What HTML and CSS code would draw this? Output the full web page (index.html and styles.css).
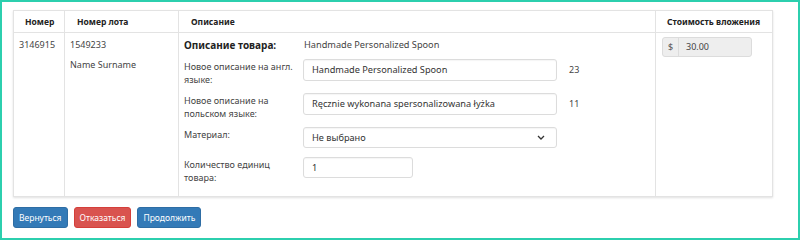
FILE: index.html
```html
<!DOCTYPE html>
<html lang="ru">
<head>
<meta charset="utf-8">
<link rel="stylesheet" href="styles.css">
</head>
<body>
<div class="frame">
  <table class="grid">
    <colgroup>
      <col class="w-num">
      <col class="w-lot">
      <col class="w-desc">
      <col class="w-cost">
    </colgroup>
    <thead>
      <tr class="head">
        <th class="c-num">Номер</th>
        <th class="c-lot">Номер лота</th>
        <th class="c-desc">Описание</th>
        <th class="c-cost">Стоимость вложения</th>
      </tr>
    </thead>
    <tbody>
      <tr class="body">
        <td class="c-num">3146915</td>
        <td class="c-lot">
          <div>1549233</div>
          <div class="name">Name Surname</div>
        </td>
        <td class="c-desc">
          <div class="form">
            <div class="title">Описание товара:</div>
            <div class="value">Handmade Personalized Spoon</div>
            <div></div>

            <div class="label">Новое описание на англ. языке:</div>
            <div class="input wide">Handmade Personalized Spoon</div>
            <div class="count">23</div>

            <div class="label">Новое описание на польском языке:</div>
            <div class="input wide">Ręcznie wykonana spersonalizowana łyżka</div>
            <div class="count">11</div>

            <div class="label">Материал:</div>
            <div class="input wide select">Не выбрано
              <svg class="chev" width="8" height="5" viewBox="0 0 8 5"><path d="M1 1 L4 4 L7 1" fill="none" stroke="#333" stroke-width="1.3"/></svg>
            </div>
            <div></div>

            <div class="label">Количество единиц товара:</div>
            <div class="input short">1</div>
            <div></div>
          </div>
        </td>
        <td class="c-cost">
          <div class="igroup">
            <span class="addon">$</span>
            <span class="ival">30.00</span>
          </div>
        </td>
      </tr>
    </tbody>
  </table>
  <div class="buttons">
    <button class="btn blue">Вернуться</button>
    <button class="btn red">Отказаться</button>
    <button class="btn blue">Продолжить</button>
  </div>
</div>
</body>
</html>
```

FILE: styles.css
```css
html, body {
  margin: 0;
  padding: 0;
  background: #fff;
}
.frame {
  box-sizing: border-box;
  width: 800px;
  height: 240px;
  border: 2px solid #2ccfae;
  padding: 8px 27px 0 11px;
  font-family: "Noto Sans", "Open Sans", sans-serif;
  font-size: 9px;
  color: #444;
}
.grid {
  border-collapse: collapse;
  width: 759px;
  table-layout: fixed;
  box-shadow: 0 1px 2px rgba(0,0,0,0.12);
}
.w-num { width: 51px; }
.w-lot { width: 114px; }
.w-desc { width: 477px; }
.w-cost { width: 117px; }
.grid th, .grid td {
  border: 1px solid #e3e3e3;
  text-align: left;
  vertical-align: top;
}
.head { height: 22px; }
.body { height: 164px; }
.grid th {
  padding: 0;
  vertical-align: middle;
  font-size: 8.5px;
  font-weight: 700;
  color: #222;
}
.grid th.c-num { padding-left: 11px; }
.grid th.c-lot { padding-left: 12px; }
.grid th.c-desc { padding-left: 12px; }
.grid th.c-cost { padding-left: 11px; }
.grid td {
  padding: 0;
}
.grid td.c-num { padding: 5px 0 0 5px; }
.grid td.c-lot { padding: 5px 0 0 5px; }
.grid td.c-lot .name { margin-top: 7px; }
.grid td.c-desc { padding: 5px 0 0 5px; }
.grid td.c-cost { padding: 4px 0 0 6px; }
.form {
  display: grid;
  grid-template-columns: 119px 254px 30px;
  grid-template-rows: 21px 34px 34px 30px 24px;
  align-items: start;
}
.title {
  font-size: 10px;
  font-weight: 700;
  color: #222;
  line-height: 14px;
}
.value {
  line-height: 14px;
  padding-left: 1px;
  font-size: 9.2px;
}
.label {
  line-height: 13px;
  padding-top: 1px;
  padding-right: 2px;
  color: #444;
  font-size: 9px;
}
.input {
  box-sizing: border-box;
  height: 22px;
  border: 1px solid #dcdcdc;
  border-radius: 3px;
  padding: 0 8px;
  line-height: 20px;
  color: #333;
  font-size: 9.2px;
  box-shadow: inset 0 1px 1px rgba(0,0,0,0.04);
}
.select {
  display: flex;
  justify-content: space-between;
  align-items: center;
  height: 21px;
}
.chev { margin-right: 3px; }
.short {
  width: 110px;
  height: 21px;
}
.count {
  padding-left: 12px;
  line-height: 22px;
}
.igroup {
  display: flex;
  width: 90px;
  height: 20px;
  box-sizing: border-box;
  border: 1px solid #dcdcdc;
  border-radius: 3px;
  background: #eeeeee;
  line-height: 18px;
}
.addon {
  width: 16px;
  box-sizing: border-box;
  text-align: center;
  border-right: 1px solid #dcdcdc;
  color: #555;
}
.ival {
  padding-left: 7px;
  color: #444;
}
.buttons {
  display: flex;
  gap: 6px;
  margin-top: 10px;
}
.btn {
  height: 21px;
  border: 1px solid transparent;
  border-radius: 3px;
  color: #fff;
  font-family: "Noto Sans", "Open Sans", sans-serif;
  font-size: 8.5px;
  padding: 0 5px;
  cursor: pointer;
}
.blue { background: #337ab7; border-color: #2e6da4; }
.red { background: #d9534f; border-color: #d43f3a; }
```
